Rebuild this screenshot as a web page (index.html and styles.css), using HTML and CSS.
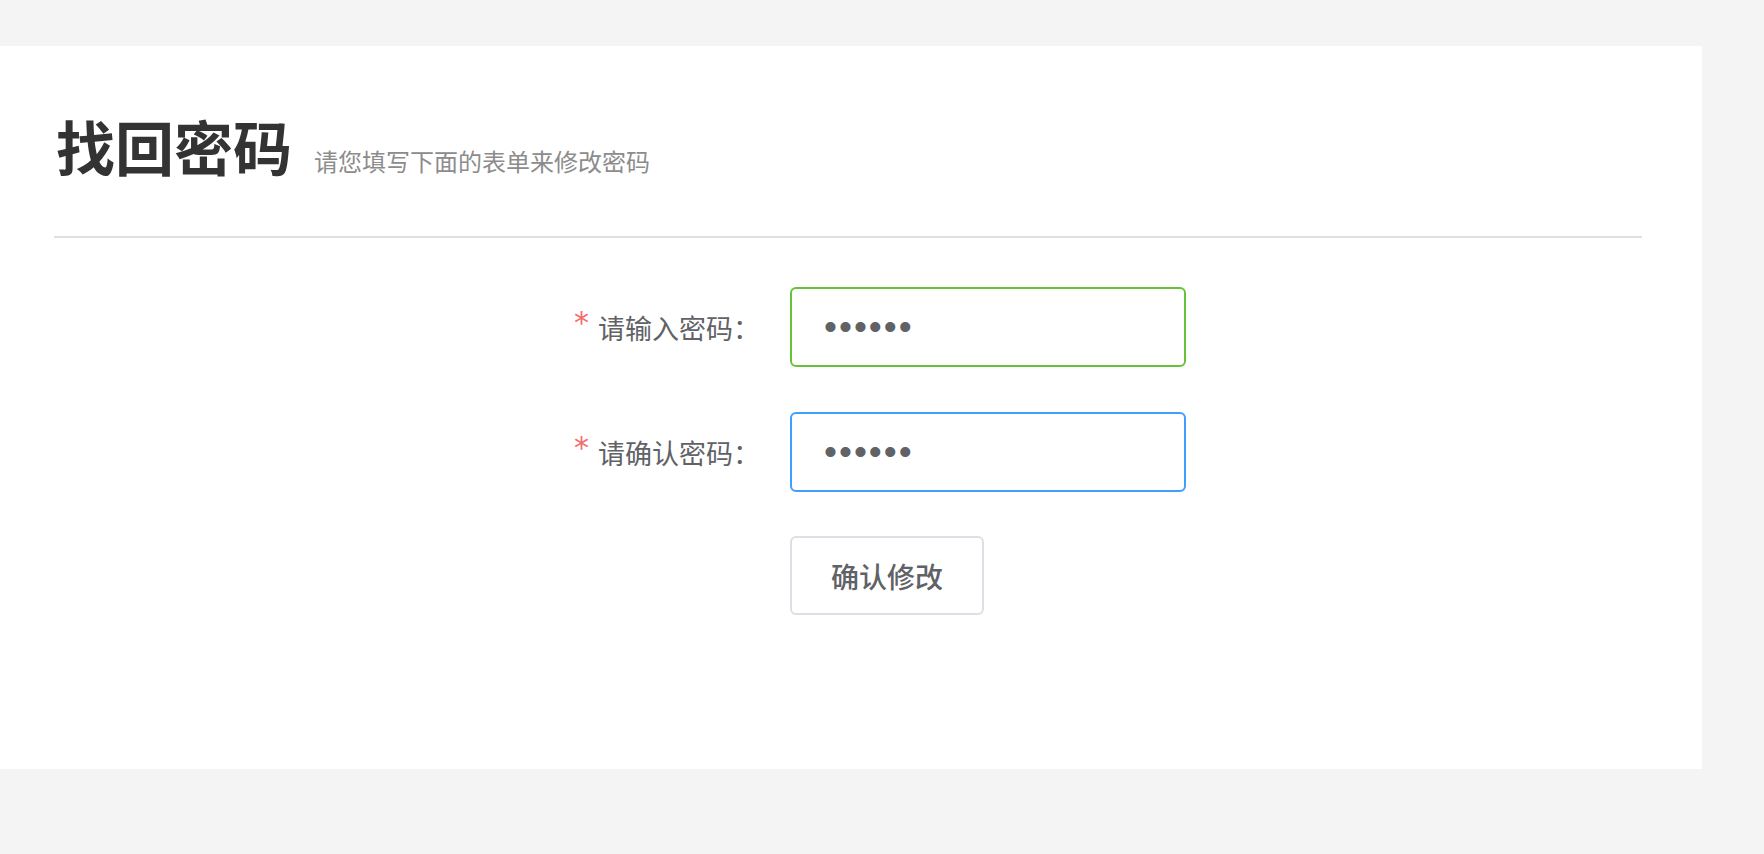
FILE: index.html
```html
<!DOCTYPE html>
<html>
<head>
<meta charset="utf-8">
<title>找回密码</title>
<link rel="stylesheet" href="styles.css">
</head>
<body>
	<div class="card">
		<div class="head">
			<h1>找回密码</h1>
			<span class="sub">请您填写下面的表单来修改密码</span>
		</div>
		<form class="form">
			<div class="row">
				<label class="label"><i>*</i>请输入密码：</label>
				<input class="ipt ok" type="password" value="123456">
			</div>
			<div class="row">
				<label class="label"><i>*</i>请确认密码：</label>
				<input class="ipt focus" type="password" value="123456">
			</div>
			<div class="row btn-row">
				<span class="label"></span>
				<button class="btn" type="button">确认修改</button>
			</div>
		</form>
	</div>
</body>
</html>
```

FILE: styles.css
```css
* { margin: 0; padding: 0; box-sizing: border-box; }
body { background: #f4f4f4; font-family: "Noto Sans CJK SC", "Noto Sans", sans-serif; }

.card { width: 1702px; margin-top: 46px; padding: 0 60px 154px 54px; background: #fff; }

.head { display: flex; align-items: baseline; padding: 64px 0 54px 2px; border-bottom: 2px solid #e0e0e0; }
.head h1 { font-size: 59px; line-height: 72px; font-weight: 700; color: #333; }
.sub { margin-left: 22px; font-size: 24px; color: #8c8c8c; }

.form { margin: 49px 0 0 516px; }
.row { display: flex; align-items: center; margin-bottom: 45px; }
.row:last-child { margin-bottom: 0; }
.btn-row { margin-top: -1px; }
.label { width: 220px; padding-right: 30px; text-align: right; font-size: 27px; color: #606266; }
.label i { font-style: normal; font-family: "DejaVu Sans", sans-serif; font-size: 30px; line-height: 1; vertical-align: top; color: #f56c6c; margin-right: 9px; }

.ipt { width: 396px; height: 80px; padding: 0 32px; border: 2px solid #dcdfe6; border-radius: 6px; outline: none; font-family: "Liberation Sans", sans-serif; font-size: 37px; letter-spacing: 2px; color: #606266; }
.ok { border-color: #67c23a; }
.focus { border-color: #409eff; }

.btn { width: 194px; height: 79px; border: 2px solid #dcdfe6; border-radius: 6px; background: #fff; font-family: "Noto Sans CJK SC", sans-serif; font-size: 28px; font-weight: 500; color: #606266; }
```
